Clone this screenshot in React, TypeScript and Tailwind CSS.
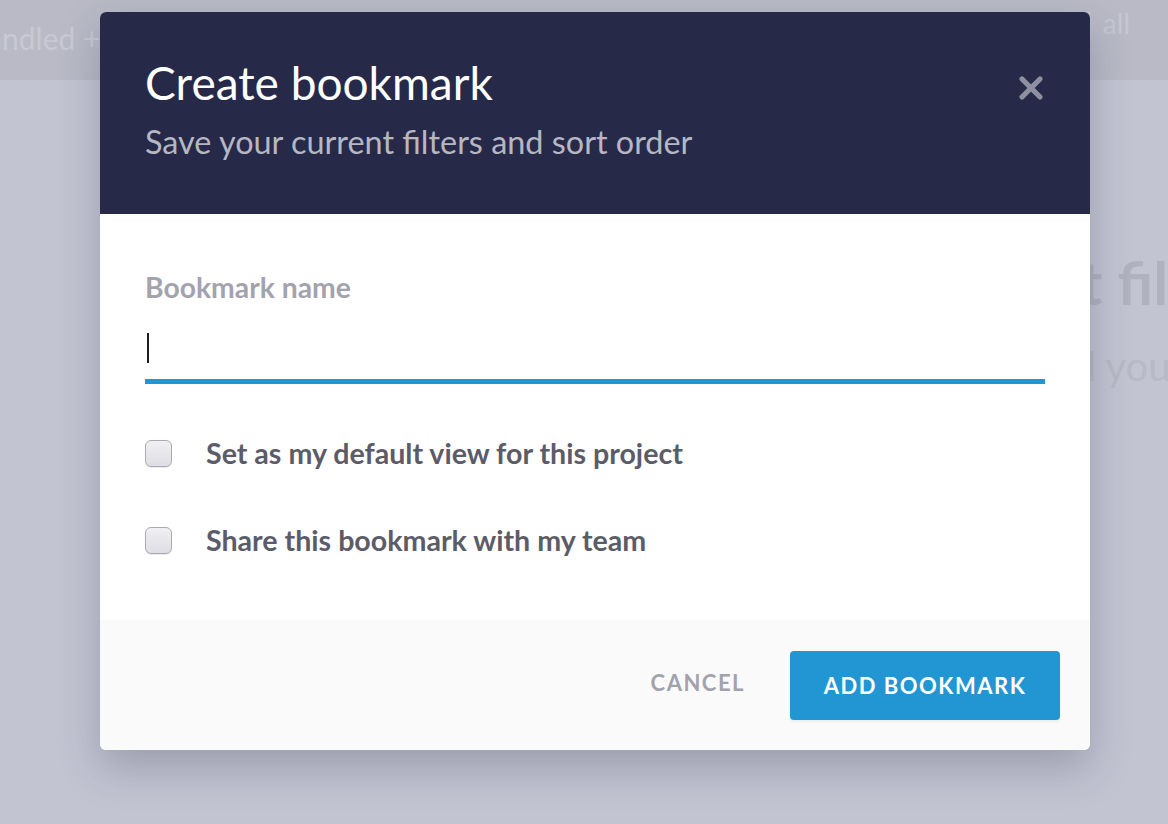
import { X } from 'lucide-react';

const FONT = { fontFamily: 'Lato, "Open Sans", sans-serif' };

function Checkbox({ label }: { label: string }) {
  return (
    <label className="flex items-center gap-[34px] h-[34px]">
      <span className="w-[27px] h-[27px] rounded-[6px] border-[1.5px] border-[#a9aab3] bg-gradient-to-b from-[#f0f0f3] to-[#dedee4] shadow-[0_1px_0_rgba(0,0,0,0.08)]" />
      <span className="text-[28.6px] leading-[34px] font-bold text-[#5c5c69]">{label}</span>
    </label>
  );
}

export default function App() {
  return (
    <div className="relative w-[1168px] h-[824px] overflow-hidden bg-[#c3c4d2]" style={FONT}>
      {/* page behind the overlay */}
      <div className="h-[80px] bg-[#b9bac6] flex items-start justify-between whitespace-nowrap">
        <div className="-ml-[68px] pt-[16px] text-[30px] text-[#c8c9d3]">Unhandled + errors</div>
        <div className="flex items-center gap-[10px] pt-[2px] pr-[38px] text-[28px] text-[#c6c7d1]">
          <span className="font-bold">30</span>
          <span>|</span>
          <span>all</span>
        </div>
      </div>
      <div className="flex flex-col items-end whitespace-nowrap pt-[172px] -mr-[103px]">
        <div className="text-[60px] font-bold text-[#b1b2bf] leading-none">Current filters</div>
        <div className="mt-[34px] text-[40px] text-[#b8b9c6] leading-none mr-[86px]">Reset and your</div>
      </div>

      {/* modal */}
      <div className="absolute inset-0 pl-[100px] pt-[12px]">
        <div className="w-[990px] h-[738px] rounded-[6px] overflow-hidden bg-white shadow-[0_18px_40px_rgba(40,42,70,0.25)] flex flex-col">
          <div className="h-[202px] shrink-0 bg-[#262a48] flex items-start justify-between pl-[45px] pr-[41px] pt-[51px]">
            <div>
              <h2 className="text-[46px] leading-[40px] text-white">Create bookmark</h2>
              <p className="mt-[21px] text-[32.4px] leading-[36px] text-[#b6b7c3]">Save your current filters and sort order</p>
            </div>
            <button className="mt-[7px] text-[#8e8fa0]">
              <X size={36} strokeWidth={3.5} />
            </button>
          </div>

          <div className="flex-1 px-[45px] pt-[58px]">
            <div className="text-[28.3px] font-bold text-[#a3a3ae] leading-[30px]">Bookmark name</div>
            <div className="mt-[29px] h-[53px] border-b-[5px] border-[#2196d3] flex items-start">
              <span className="ml-[2px] mt-[2px] w-[2px] h-[30px] bg-[#1e1e28]" />
            </div>
            <div className="mt-[52px] flex flex-col gap-[53px]">
              <Checkbox label="Set as my default view for this project" />
              <Checkbox label="Share this bookmark with my team" />
            </div>
          </div>

          <div className="h-[130px] shrink-0 bg-[#fafafa] flex items-center justify-end gap-[45px] pr-[30px]">
            <button className="mb-[5px] text-[22px] font-bold tracking-[1.5px] text-[#a2a2ac]">CANCEL</button>
            <button className="w-[270px] h-[69px] rounded-[4px] bg-[#2196d3] text-white text-[22px] font-bold tracking-[1.5px] shadow-[0_2px_3px_rgba(0,0,0,0.06)]">
              ADD BOOKMARK
            </button>
          </div>
        </div>
      </div>
    </div>
  );
}
